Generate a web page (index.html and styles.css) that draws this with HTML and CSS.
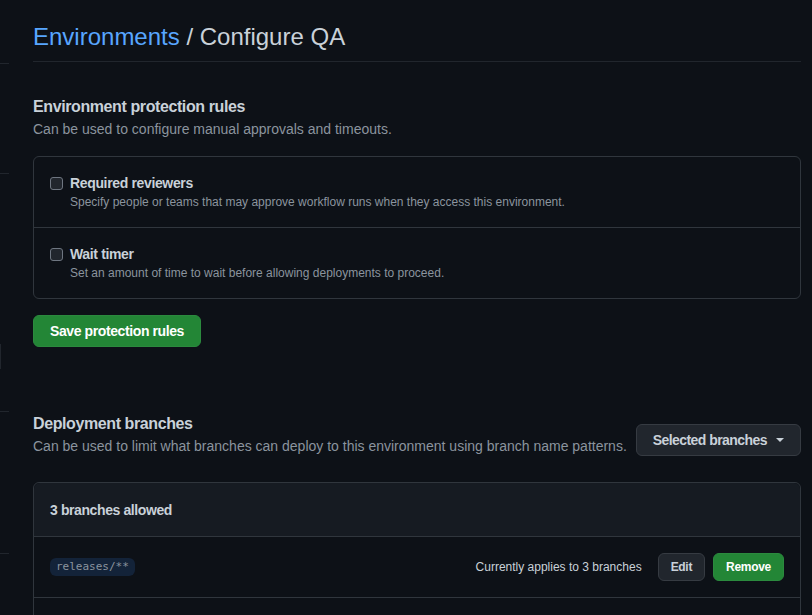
FILE: index.html
```html
<!DOCTYPE html>
<html lang="en">
<head>
<meta charset="utf-8">
<title>Configure QA</title>
<link rel="stylesheet" href="styles.css">
</head>
<body>
<div class="layout">
  <nav class="sidebar">
    <div class="nav-item nav-a"></div>
    <div class="nav-item nav-b"></div>
    <div class="nav-item nav-c"></div>
    <div class="nav-item nav-d"></div>
  </nav>
  <main class="main">
    <h1 class="page-title"><a class="crumb" href="#">Environments</a> / Configure QA</h1>

    <section class="section">
      <h2 class="section-title">Environment protection rules</h2>
      <p class="section-note">Can be used to configure manual approvals and timeouts.</p>
      <div class="box">
        <label class="rule">
          <input type="checkbox" class="check">
          <span class="rule-text">
            <span class="rule-name">Required reviewers</span>
            <span class="rule-desc">Specify people or teams that may approve workflow runs when they access this environment.</span>
          </span>
        </label>
        <label class="rule">
          <input type="checkbox" class="check">
          <span class="rule-text">
            <span class="rule-name">Wait timer</span>
            <span class="rule-desc">Set an amount of time to wait before allowing deployments to proceed.</span>
          </span>
        </label>
      </div>
      <button class="btn btn-primary btn-save">Save protection rules</button>
    </section>

    <section class="section section-branches">
      <div class="branch-head">
        <div class="branch-intro">
          <h2 class="section-title">Deployment branches</h2>
          <p class="section-note">Can be used to limit what branches can deploy to this environment using branch name patterns.</p>
        </div>
        <button class="btn btn-select">Selected branches <span class="caret"></span></button>
      </div>
      <div class="box branch-box">
        <div class="box-header">3 branches allowed</div>
        <div class="branch-row">
          <code class="pattern">releases/**</code>
          <span class="applies">Currently applies to 3 branches</span>
          <button class="btn btn-sm">Edit</button>
          <button class="btn btn-sm btn-primary">Remove</button>
        </div>
        <div class="branch-row branch-row-empty"></div>
      </div>
    </section>
  </main>
</div>
</body>
</html>
```

FILE: styles.css
```css
* { box-sizing: border-box; }
html, body {
  margin: 0;
  padding: 0;
  background: #0d1117;
  color: #c9d1d9;
  font-family: "Liberation Sans", Arial, sans-serif;
  font-size: 14px;
  line-height: 1.5;
  height: 615px;
  overflow: hidden;
}
.layout {
  display: flex;
  gap: 24px;
}
.sidebar {
  width: 9px;
  flex: none;
  display: flex;
  flex-direction: column;
}
.nav-item { border-bottom: 1px solid #21262d; }
.nav-a { height: 64px; }
.nav-b { height: 110px; }
.nav-c { height: 238px; position: relative; }
.nav-d { height: 142px; }
.nav-c::before {
  content: "";
  position: absolute;
  left: 0;
  top: 170px;
  width: 1px;
  height: 25px;
  background: #21262d;
}
.main {
  flex: 1;
  min-width: 0;
  padding-right: 11px;
  padding-top: 19px;
}
.page-title {
  margin: 0;
  font-size: 24px;
  font-weight: 400;
  line-height: 36px;
  padding-bottom: 6px;
  border-bottom: 1px solid #21262d;
  color: #c9d1d9;
}
.crumb { color: #58a6ff; text-decoration: none; }
.section { margin-top: 33px; }
.section-title {
  margin: 0;
  font-size: 16px;
  font-weight: 700;
  letter-spacing: -0.4px;
  line-height: 24px;
  color: #c9d1d9;
}
.section-note {
  margin: 0;
  font-size: 14px;
  line-height: 21px;
  color: #8b949e;
}
.box {
  margin-top: 16px;
  border: 1px solid #30363d;
  border-radius: 6px;
}
.rule {
  display: flex;
  gap: 7px;
  padding: 16px;
  align-items: flex-start;
}
.rule + .rule { border-top: 1px solid #30363d; }
.check {
  appearance: none;
  -webkit-appearance: none;
  margin: 4px 0 0;
  width: 13px;
  height: 13px;
  flex: none;
  border: 1px solid #6e7681;
  border-radius: 3px;
  background: #21262d;
}
.rule-text { display: flex; flex-direction: column; }
.rule-name { font-weight: 700; letter-spacing: -0.35px; font-size: 14px; line-height: 21px; }
.rule-desc { font-size: 12px; line-height: 17px; color: #8b949e; }
.btn {
  font-family: inherit;
  font-size: 14px;
  font-weight: 700;
  letter-spacing: -0.4px;
  line-height: 20px;
  height: 32px;
  padding: 5px 16px;
  border-radius: 6px;
  border: 1px solid #363b42;
  background: #21262d;
  color: #c9d1d9;
  cursor: pointer;
  white-space: nowrap;
}
.btn-primary {
  background: #238636;
  border-color: #2b8a3e;
  color: #ffffff;
}
.btn-save { margin-top: 16px; display: block; }
.section-branches { margin-top: 65px; }
.branch-head {
  display: flex;
  justify-content: space-between;
  align-items: flex-end;
  gap: 8px;
}
.branch-intro { white-space: nowrap; }
.btn-select {
  display: flex;
  align-items: center;
  gap: 9px;
  letter-spacing: -0.55px;
  margin-bottom: 1px;
  flex: none;
}
.caret {
  width: 0;
  height: 0;
  border-left: 4px solid transparent;
  border-right: 4px solid transparent;
  border-top: 4px solid #c9d1d9;
}
.branch-box { margin-top: 25px; }
.box-header {
  background: #161b22;
  padding: 17px 16px 15px;
  font-weight: 700;
  letter-spacing: -0.4px;
  line-height: 21px;
  border-radius: 6px 6px 0 0;
  border-bottom: 1px solid #30363d;
}
.branch-row {
  display: flex;
  align-items: center;
  padding: 16px;
  gap: 8px;
  border-bottom: 1px solid #30363d;
}
.branch-row-empty { height: 40px; border-bottom: none; }
.pattern {
  font-family: "DejaVu Sans Mono", "Liberation Mono", monospace;
  font-size: 11px;
  line-height: 18px;
  padding: 0 6px;
  border-radius: 6px;
  background: #132339;
  color: #8b949e;
}
.applies {
  margin-left: auto;
  margin-right: 8px;
  font-size: 12px;
  color: #c9d1d9;
}
.btn-sm {
  height: 28px;
  font-size: 12px;
  letter-spacing: -0.3px;
  line-height: 18px;
  padding: 4px 12px;
}
```
